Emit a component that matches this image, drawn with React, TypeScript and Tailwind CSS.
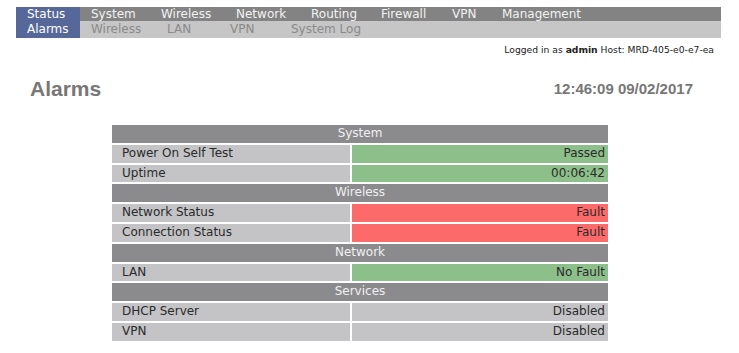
const topNav = [
  { label: 'Status', w: 'w-[64px]', active: true },
  { label: 'System', w: 'w-[70px]' },
  { label: 'Wireless', w: 'w-[75px]' },
  { label: 'Network', w: 'w-[75px]' },
  { label: 'Routing', w: 'w-[70px]' },
  { label: 'Firewall', w: 'w-[71px]' },
  { label: 'VPN', w: 'w-[50px]' },
  { label: 'Management', w: 'w-[110px]' },
];

const subNav = [
  { label: 'Alarms', w: 'w-[64px]', active: true },
  { label: 'Wireless', w: 'w-[76px]' },
  { label: 'LAN', w: 'w-[63px]' },
  { label: 'VPN', w: 'w-[61px]' },
  { label: 'System Log', w: 'w-[100px]' },
];

type Row =
  | { kind: 'header'; label: string }
  | { kind: 'item'; label: string; value: string; state: 'ok' | 'fault' | 'plain' };

const rows: Row[] = [
  { kind: 'header', label: 'System' },
  { kind: 'item', label: 'Power On Self Test', value: 'Passed', state: 'ok' },
  { kind: 'item', label: 'Uptime', value: '00:06:42', state: 'ok' },
  { kind: 'header', label: 'Wireless' },
  { kind: 'item', label: 'Network Status', value: 'Fault', state: 'fault' },
  { kind: 'item', label: 'Connection Status', value: 'Fault', state: 'fault' },
  { kind: 'header', label: 'Network' },
  { kind: 'item', label: 'LAN', value: 'No Fault', state: 'ok' },
  { kind: 'header', label: 'Services' },
  { kind: 'item', label: 'DHCP Server', value: 'Disabled', state: 'plain' },
  { kind: 'item', label: 'VPN', value: 'Disabled', state: 'plain' },
];

const valueBg = {
  ok: 'bg-[#8dbf8a]',
  fault: 'bg-[#fd6a6a]',
  plain: 'bg-[#c4c4c6]',
};

export default function App() {
  return (
    <div className="w-[739px] h-[353px] bg-white overflow-hidden font-['DejaVu_Sans',sans-serif]">
      <nav className="ml-[16px] mt-[7px] w-[705px]">
        <div className="flex h-[14px] bg-[#838383] text-[12px] leading-[14px] text-[#f2f2f2]">
          {topNav.map((n) => (
            <div
              key={n.label}
              className={`${n.w} pl-[11px] ${n.active ? 'bg-[#56679a] text-white' : ''}`}
            >
              {n.label}
            </div>
          ))}
        </div>
        <div className="flex h-[17px] bg-[#c6c6c6] text-[12px] leading-[17px] text-[#8a8a8a]">
          {subNav.map((n) => (
            <div
              key={n.label}
              className={`${n.w} pl-[11px] ${n.active ? 'bg-[#56679a] text-white' : ''}`}
            >
              {n.label}
            </div>
          ))}
        </div>
      </nav>

      <div className="mt-[6px] pr-[25px] text-right text-[9.2px] leading-[12px] text-[#222]">
        Logged in as <b>admin</b> Host: MRD-405-e0-e7-ea
      </div>

      <div className="mt-[20px] flex items-center justify-between pl-[30px] pr-[46px] font-['Liberation_Sans',Arial,sans-serif] font-bold text-[#777]">
        <h1 className="text-[21px] leading-[26px]">Alarms</h1>
        <span className="text-[15px] leading-[26px]">12:46:09 09/02/2017</span>
      </div>

      <div className="ml-[112px] mt-[23px] flex w-[496px] flex-col gap-[2px] text-[12px] leading-[17.8px]">
        {rows.map((r, i) =>
          r.kind === 'header' ? (
            <div key={i} className="h-[17.8px] bg-[#8b8b8d] text-center text-[#f0f0f0]">
              {r.label}
            </div>
          ) : (
            <div key={i} className="flex h-[17.8px] gap-[2px] text-[#2a2a2a]">
              <div className="w-[238px] bg-[#c4c4c6] pl-[10px]">{r.label}</div>
              <div className={`flex-1 pr-[3px] text-right ${valueBg[r.state]}`}>{r.value}</div>
            </div>
          )
        )}
      </div>
    </div>
  );
}
